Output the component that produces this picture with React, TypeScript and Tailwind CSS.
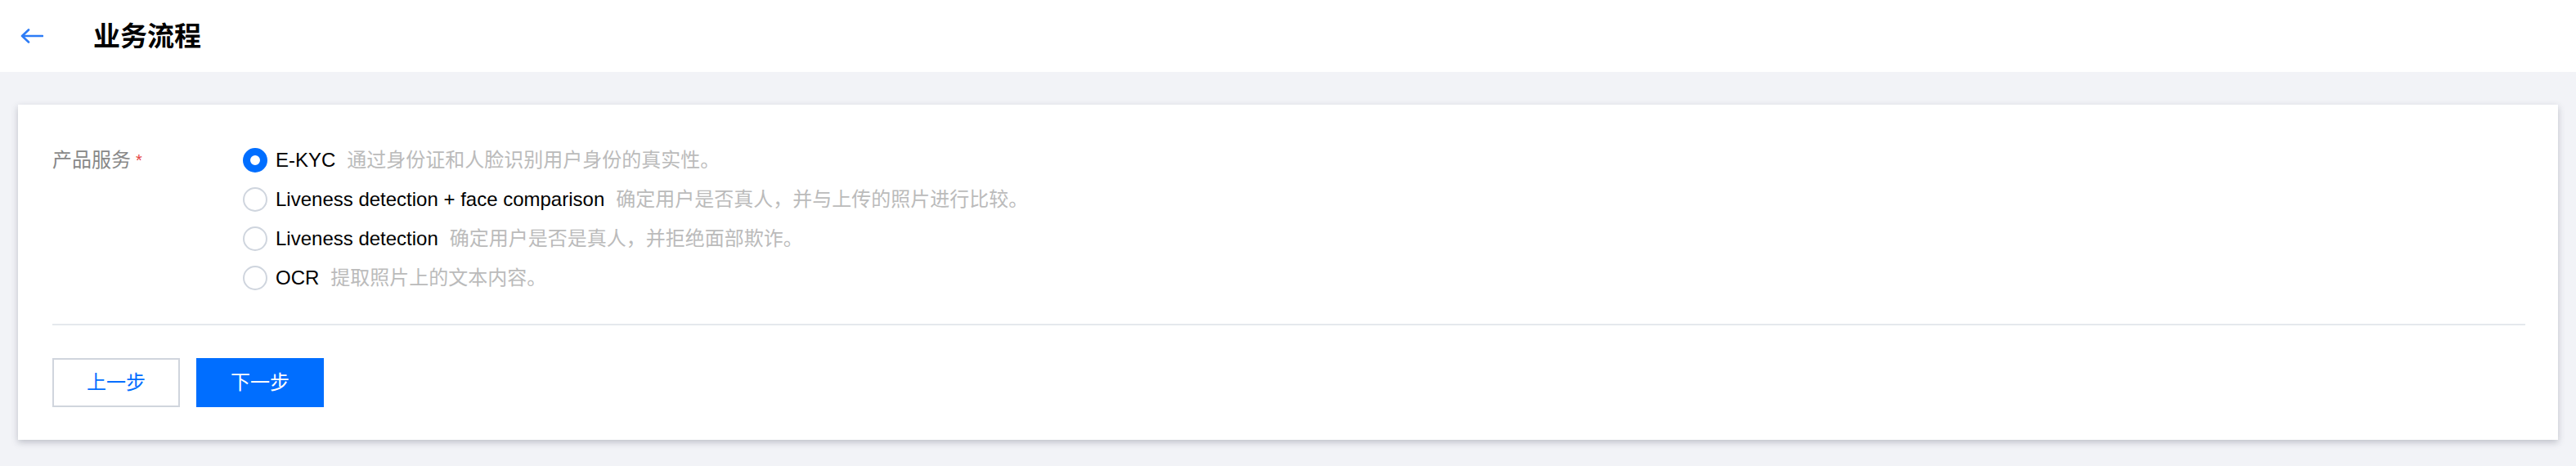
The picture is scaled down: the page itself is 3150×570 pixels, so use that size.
const options = [
  { name: "E-KYC", desc: "通过身份证和人脸识别用户身份的真实性。" },
  { name: "Liveness detection + face comparison", desc: "确定用户是否真人，并与上传的照片进行比较。" },
  { name: "Liveness detection", desc: "确定用户是否是真人，并拒绝面部欺诈。" },
  { name: "OCR", desc: "提取照片上的文本内容。" },
];

export default function App() {
  const selected = 0;

  return (
    <div className="min-h-[570px] w-full bg-[#f2f3f7] font-['Liberation_Sans','Noto_Sans_CJK_SC',sans-serif] text-[24px]">
      {/* top bar */}
      <header className="flex h-[88px] items-center bg-white pl-[25px]">
        <svg width="28" height="18" viewBox="0 0 28 18" fill="none" className="shrink-0">
          <path d="M2 9H27M10 1.5L2 9l8 7.5" stroke="#2d7cf6" strokeWidth="2.6" strokeLinecap="round" strokeLinejoin="round" />
        </svg>
        <h1 className="ml-[61px] text-[33px] font-bold leading-none text-black">业务流程</h1>
      </header>

      <main className="px-[22px] pt-[40px]">
        <div className="bg-white pl-[42px] pr-[40px] pt-[44px] pb-[40px] shadow-[0_3px_8px_rgba(54,58,80,0.28)]">
          <div className="flex">
            <div className="flex h-[48px] w-[233px] shrink-0 items-center text-[#888888]">
              产品服务
              <span className="ml-[6px] text-[20px] text-[#e54545]">*</span>
            </div>
            <div className="flex flex-col">
              {options.map((opt, i) => (
                <label key={opt.name} className="flex h-[48px] cursor-pointer items-center">
                  {i === selected ? (
                    <span className="box-border h-[30px] w-[30px] shrink-0 rounded-full border-[9px] border-[#006eff] bg-white" />
                  ) : (
                    <span className="box-border h-[30px] w-[30px] shrink-0 rounded-full border-2 border-[#cfd5de] bg-white" />
                  )}
                  <span className="ml-[10px] text-[#000000]">{opt.name}</span>
                  <span className="ml-[14px] text-[#bbbbbb]">{opt.desc}</span>
                </label>
              ))}
            </div>
          </div>

          <div className="mt-[32px] h-[2px] bg-[#e5e8ed]" />

          <div className="mt-[40px] flex gap-[20px]">
            <button className="box-border h-[60px] w-[156px] border-2 border-[#d0d5dd] bg-white text-[24px] text-[#006eff]">
              上一步
            </button>
            <button className="h-[60px] w-[156px] bg-[#006eff] text-[24px] text-white">下一步</button>
          </div>
        </div>
      </main>
    </div>
  );
}
